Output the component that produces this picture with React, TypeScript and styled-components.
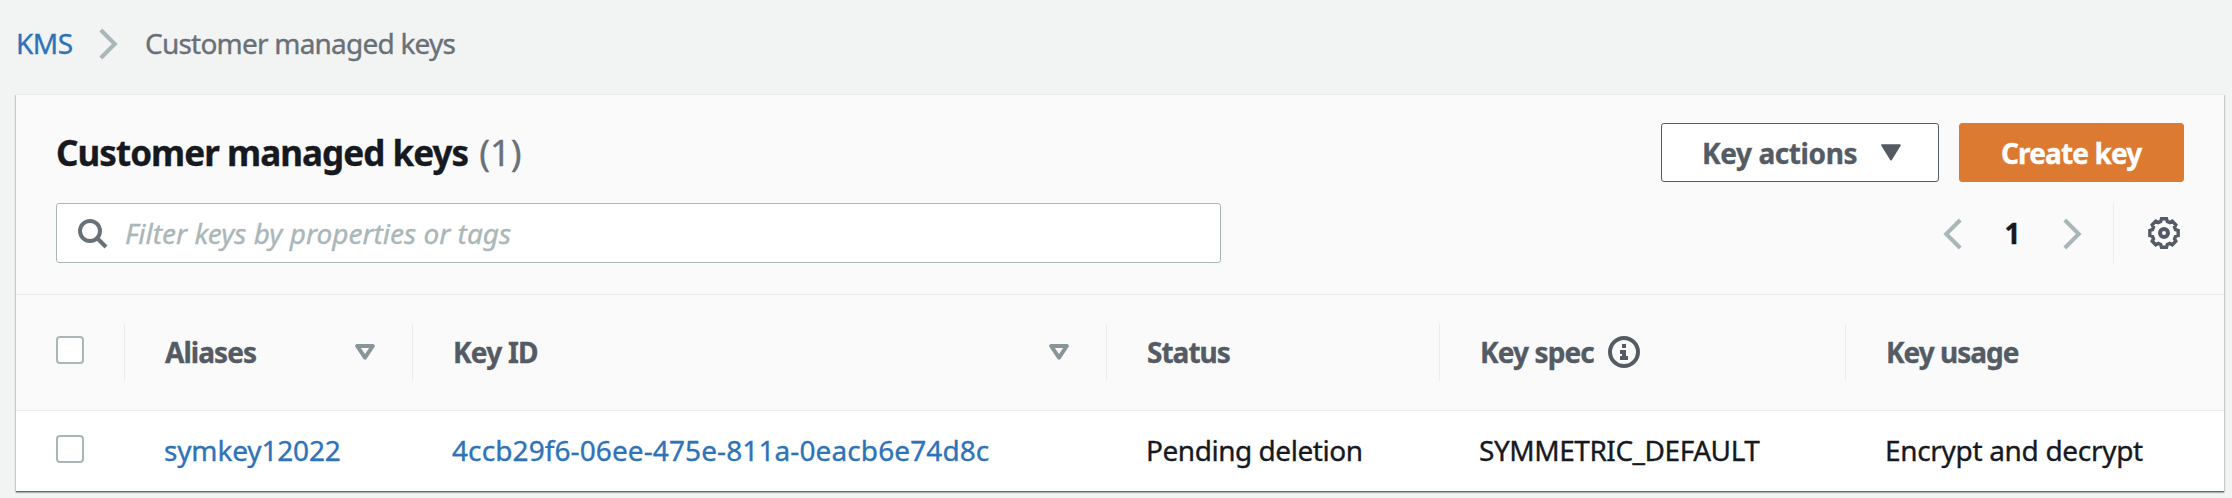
import React from "react";
import styled, { createGlobalStyle } from "styled-components";

const color = {
  page: "#f2f3f3",
  panel: "#fafafa",
  line: "#eaeded",
  control: "#aab7b8",
  sort: "#879596",
  muted: "#687078",
  label: "#545b64",
  text: "#16191f",
  link: "#2e73b8",
  accent: "#dd7a32",
};

const GlobalStyle = createGlobalStyle`
  *, *::before, *::after { box-sizing: border-box; }
  body {
    margin: 0;
    background: ${color.page};
    color: ${color.text};
    font-family: "Noto Sans", "Open Sans", sans-serif;
    font-size: 28px;
    line-height: 40px;
    -webkit-text-stroke-width: 0.35px;
  }
  svg { display: block; flex: none; }
`;

const Page = styled.main`
  height: 498px;
  overflow: hidden;
`;

const Breadcrumbs = styled.nav`
  display: flex;
  align-items: center;
  height: 94px;
  padding: 0 0 8px 16px;
`;

const Crumb = styled.a<{ $current?: boolean }>`
  color: ${(p) => (p.$current ? color.muted : color.link)};
  letter-spacing: ${(p) => (p.$current ? "-0.78px" : "-0.5px")};
  white-space: nowrap;
`;

const CrumbRoot = styled.span`
  width: 83px;
`;

const CrumbSeparator = styled.span`
  width: 46px;
  padding-top: 1px;
`;

const Panel = styled.section`
  width: 2208px;
  margin-left: 16px;
  background: ${color.panel};
  border-top: 1px solid ${color.line};
  box-shadow: 0 1px 0 rgba(0, 28, 36, 0.3), 0 2px 1px rgba(0, 28, 36, 0.25),
    1px 1px 1px rgba(0, 28, 36, 0.15), -1px 1px 1px rgba(0, 28, 36, 0.15);
`;

const PanelHeader = styled.header`
  height: 199px;
  padding: 28px 40px 0;
`;

const HeaderRow = styled.div`
  display: flex;
  align-items: center;
  justify-content: space-between;
`;

const ToolRow = styled(HeaderRow)`
  margin-top: 21px;
`;

const Title = styled.h1`
  margin: 0;
  font-size: 35px;
  font-weight: 700;
  letter-spacing: -0.95px;
  white-space: nowrap;
`;

const Count = styled.span`
  margin-left: 3px;
  color: ${color.muted};
  font-size: 36px;
  font-weight: 400;
  letter-spacing: 0;
`;

const Actions = styled.div`
  display: flex;
  gap: 20px;
`;

const Button = styled.button<{ $primary?: boolean }>`
  display: flex;
  align-items: center;
  width: ${(p) => (p.$primary ? 225 : 278)}px;
  height: 59px;
  padding: 0 0 0 ${(p) => (p.$primary ? 41 : 40)}px;
  border: 1px solid ${(p) => (p.$primary ? color.accent : color.label)};
  border-radius: 3px;
  background: ${(p) => (p.$primary ? color.accent : "#fff")};
  color: ${(p) => (p.$primary ? "#fff" : color.label)};
  font: inherit;
  font-weight: 700;
  letter-spacing: ${(p) => (p.$primary ? "-0.88px" : "-0.4px")};
  white-space: nowrap;

  svg {
    margin-left: 24px;
  }
`;

const SearchBox = styled.label`
  display: flex;
  align-items: center;
  width: 1165px;
  height: 60px;
  padding-left: 21px;
  border: 1px solid ${color.control};
  border-radius: 3px;
  background: #fff;

  svg {
    margin-top: 2px;
  }
`;

const SearchInput = styled.input`
  flex: 1;
  height: 56px;
  margin-left: 17px;
  padding: 0;
  border: 0;
  outline: 0;
  background: transparent;
  font: inherit;
  font-style: italic;

  &::placeholder {
    color: ${color.control};
    opacity: 1;
  }
`;

const Pager = styled.div`
  display: flex;
  align-items: center;
  height: 60px;

  > svg {
    margin-top: 2px;
  }
`;

const PageNumber = styled.span`
  width: 101px;
  font-weight: 700;
  text-align: center;
`;

const Preferences = styled.div`
  display: flex;
  align-items: center;
  height: 60px;
  margin-left: 31px;
  padding: 0 4px 0 34px;
  border-left: 1px solid ${color.line};
`;

const Grid = styled.div`
  display: grid;
  grid-template-columns: 108px 288px 694px 333px 406px 1fr;
  align-items: center;
`;

const HeadRow = styled(Grid)`
  height: 117px;
  border-top: 1px solid ${color.line};
  border-bottom: 1px solid ${color.line};
`;

const BodyRow = styled(Grid)`
  height: 80px;
  background: #fff;
`;

const SelectCell = styled.div`
  padding: 0 0 5px 40px;
`;

const Checkbox = styled.span`
  display: block;
  width: 28px;
  height: 28px;
  border: 2px solid ${color.control};
  border-radius: 4px;
  background: #fff;
`;

const HeadCell = styled.div<{ $track: number }>`
  display: flex;
  align-items: center;
  height: 57px;
  padding: 0 37px 2px 40px;
  border-left: 1px solid ${color.line};
  color: ${color.label};
  font-weight: 700;
  letter-spacing: ${(p) => p.$track}px;
  white-space: nowrap;
`;

const SortIcon = styled.svg`
  margin-left: auto;
`;

const InfoIcon = styled.svg`
  margin-left: 14px;
`;

const Cell = styled.div<{ $track: number; $link?: boolean }>`
  padding: 0 0 2px 40px;
  color: ${(p) => (p.$link ? color.link : color.text)};
  letter-spacing: ${(p) => p.$track}px;
  white-space: nowrap;
`;

function Chevron({ left }: { left?: boolean }) {
  return (
    <svg width="19" height="32" viewBox="0 0 19 32" fill="none" stroke={color.control} strokeWidth="4">
      <path d={left ? "M17.2 2 3.2 16l14 14" : "M1.8 2l14 14-14 14"} />
    </svg>
  );
}

function Search() {
  return (
    <svg width="30" height="30" viewBox="0 0 30 30" fill="none" stroke={color.muted} strokeWidth="4">
      <circle cx="12" cy="12" r="10" />
      <path d="M19 19l9 9" />
    </svg>
  );
}

const gearOutline = Array.from({ length: 8 }, (_, i) =>
  [
    [-10, 14.4],
    [10, 14.4],
    [16, 12],
    [29, 12],
  ].map(([offset, radius]) => {
    const angle = ((i * 45 + offset) * Math.PI) / 180;
    return `${(16 + radius * Math.sin(angle)).toFixed(2)},${(16 - radius * Math.cos(angle)).toFixed(2)}`;
  }),
)
  .flat()
  .join(" ");

function Gear() {
  return (
    <svg width="32" height="32" viewBox="0 0 32 32" fill="none" stroke={color.label}>
      <polygon points={gearOutline} strokeWidth="3.4" />
      <circle cx="16" cy="16" r="4" strokeWidth="4" />
    </svg>
  );
}

function Sort() {
  return (
    <SortIcon width="20" height="16" viewBox="0 0 20 16" fill="none" stroke={color.sort} strokeWidth="4" strokeLinejoin="round">
      <path d="M2.2 2h15.6L10 13.6z" />
    </SortIcon>
  );
}

function Info() {
  return (
    <InfoIcon width="32" height="32" viewBox="0 0 32 32">
      <circle cx="16" cy="16" r="14" fill="none" stroke={color.label} strokeWidth="4" />
      <path fill={color.label} d="M14 8h4v4h-4zM12 14h6v6h2v4h-8v-4h2v-2h-2z" />
    </InfoIcon>
  );
}

export default function App() {
  return (
    <Page>
      <GlobalStyle />
      <Breadcrumbs>
        <CrumbRoot>
          <Crumb>KMS</Crumb>
        </CrumbRoot>
        <CrumbSeparator>
          <Chevron />
        </CrumbSeparator>
        <Crumb $current>Customer managed keys</Crumb>
      </Breadcrumbs>

      <Panel>
        <PanelHeader>
          <HeaderRow>
            <Title>
              Customer managed keys <Count>(1)</Count>
            </Title>
            <Actions>
              <Button>
                Key actions
                <svg width="20" height="17" viewBox="0 0 20 17" fill={color.label} stroke={color.label} strokeWidth="2" strokeLinejoin="round">
                  <path d="M1.2 1.2h17.6L10 15.4z" />
                </svg>
              </Button>
              <Button $primary>Create key</Button>
            </Actions>
          </HeaderRow>
          <ToolRow>
            <SearchBox>
              <Search />
              <SearchInput placeholder="Filter keys by properties or tags" />
            </SearchBox>
            <Pager>
              <Chevron left />
              <PageNumber>1</PageNumber>
              <Chevron />
              <Preferences>
                <Gear />
              </Preferences>
            </Pager>
          </ToolRow>
        </PanelHeader>

        <HeadRow>
          <SelectCell>
            <Checkbox />
          </SelectCell>
          <HeadCell $track={-0.95}>
            Aliases
            <Sort />
          </HeadCell>
          <HeadCell $track={-0.78}>
            Key ID
            <Sort />
          </HeadCell>
          <HeadCell $track={-0.98}>Status</HeadCell>
          <HeadCell $track={-0.88}>
            Key spec
            <Info />
          </HeadCell>
          <HeadCell $track={-1}>Key usage</HeadCell>
        </HeadRow>
        <BodyRow>
          <SelectCell>
            <Checkbox />
          </SelectCell>
          <Cell $link $track={-0.16}>symkey12022</Cell>
          <Cell $link $track={0.1}>4ccb29f6-06ee-475e-811a-0eacb6e74d8c</Cell>
          <Cell $track={-0.46}>Pending deletion</Cell>
          <Cell $track={-0.46}>SYMMETRIC_DEFAULT</Cell>
          <Cell $track={-0.32}>Encrypt and decrypt</Cell>
        </BodyRow>
      </Panel>
    </Page>
  );
}
